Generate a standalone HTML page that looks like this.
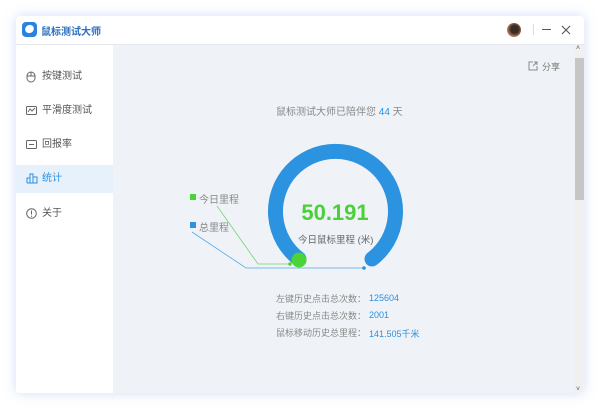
<!DOCTYPE html>
<html><head><meta charset="utf-8"><style>
body{margin:0;width:600px;height:409px;background:#fff;font-family:"Liberation Sans","Noto Sans CJK SC",sans-serif;overflow:hidden;position:relative}
.win{position:absolute;left:16px;top:16px;width:568px;height:377px;background:#fff;border-radius:4px;box-shadow:0 0 12px rgba(120,160,230,.35);overflow:hidden}
.title{position:absolute;left:0;top:0;width:568px;height:28px;background:#fff;border-bottom:1px solid #e4e7ec}
.side{position:absolute;left:0;top:29px;width:97px;height:348px;background:#fff}
.main{position:absolute;left:97px;top:29px;width:462px;height:348px;background:#eff3f7}
.sb{position:absolute;left:559px;top:29px;width:9px;height:348px;background:#f0f0f0}
.item{position:absolute;left:0;width:97px;height:27px;font-size:10px;color:#555;line-height:27px}
.item span{position:absolute;left:26px}
.t{position:absolute;font-size:9px;color:#888;white-space:nowrap}
.b{color:#2f8fde}
</style></head><body>
<div class="win">
 <div class="title">
  <div style="position:absolute;left:6px;top:6px;width:15px;height:15px;border-radius:4px;background:#2a82e0"><div style="position:absolute;left:3px;top:3px;width:9px;height:8px;border-radius:50%;background:#fff;transform:rotate(-30deg)"></div></div>
  <div style="position:absolute;left:25px;top:7px;font-size:10px;color:#2a6fc0;font-weight:bold">鼠标测试大师</div>
  <div style="position:absolute;left:491px;top:7px;width:14px;height:14px;border-radius:50%;background:radial-gradient(circle at 55% 45%,#3a2a22 35%,#c08060 70%,#ddd)"></div>
  <div style="position:absolute;left:517px;top:8px;width:1px;height:11px;background:#ddd"></div>
  <div style="position:absolute;left:526px;top:13px;width:9px;height:1px;background:#555"></div>
  <svg style="position:absolute;left:545px;top:9px" width="10" height="10"><path d="M1 1L9 9M9 1L1 9" stroke="#555" stroke-width="1.1"/></svg>
 </div>
 <div class="side">
  <div class="item" style="top:18px"><svg style="position:absolute;left:10px;top:8px" width="10" height="12"><rect x="1" y="1" width="8" height="10" rx="4" fill="none" stroke="#666"/><line x1="1" y1="5" x2="9" y2="5" stroke="#666"/><line x1="5" y1="1" x2="5" y2="5" stroke="#666"/></svg><span>按键测试</span></div>
  <div class="item" style="top:52px"><svg style="position:absolute;left:10px;top:9px" width="11" height="9"><rect x=".5" y=".5" width="10" height="8" rx="1" fill="none" stroke="#666"/><polyline points="2,6 4,3 6,5 9,2" fill="none" stroke="#666"/></svg><span>平滑度测试</span></div>
  <div class="item" style="top:86px"><svg style="position:absolute;left:10px;top:9px" width="11" height="9"><rect x=".5" y=".5" width="10" height="8" rx="1" fill="none" stroke="#666"/><line x1="3" y1="4.5" x2="8" y2="4.5" stroke="#666"/></svg><span>回报率</span></div>
  <div class="item" style="top:120px;background:#e6f1fb;color:#2f8fde;height:28px"><svg style="position:absolute;left:10px;top:8px" width="12" height="11"><path d="M1 10V5h3v5M4 10V1h3v9M7 10V4h4v6H1" fill="none" stroke="#2f8fde"/></svg><span>统计</span></div>
  <div class="item" style="top:155px"><svg style="position:absolute;left:10px;top:8px" width="11" height="11"><circle cx="5.5" cy="5.5" r="4.8" fill="none" stroke="#666"/><line x1="5.5" y1="2.5" x2="5.5" y2="6.5" stroke="#666"/><circle cx="5.5" cy="8.2" r=".6" fill="#666"/></svg><span>关于</span></div>
 </div>
 <div class="main"></div>
 <div class="sb"><div style="position:absolute;left:0;top:13px;width:9px;height:142px;background:#c6c6c6"></div><div style="position:absolute;left:1px;top:0;font-size:7px;color:#555">˄</div><div style="position:absolute;left:1px;bottom:0;font-size:7px;color:#555">˅</div></div>
</div>
<svg style="position:absolute;left:528px;top:61px" width="10" height="10"><path d="M5 1H1v8h8V5M6 1h3v3M9 1L5 5" fill="none" stroke="#888"/></svg>
<div class="t" style="left:542px;top:60px;color:#777">分享</div>
<div class="t" style="left:276px;top:103px;font-size:10px">鼠标测试大师已陪伴您 <span class="b">44</span> 天</div>
<svg style="position:absolute;left:0;top:0" width="600" height="409">
 <path d="M299 259 A60 60 0 1 1 372 259" fill="none" stroke="#2c93e0" stroke-width="15" stroke-linecap="round"/>
 <circle cx="299" cy="260" r="7.5" fill="#4bd43a"/>
 <polyline points="217,206 258,264 290,264" fill="none" stroke="#6fd86a" stroke-width=".8"/>
 <circle cx="290" cy="264" r="1.8" fill="#4bd43a"/>
 <polyline points="192,232 246,268 364,268" fill="none" stroke="#5aa8e6" stroke-width=".8"/>
 <circle cx="364" cy="268" r="1.8" fill="#2c93e0"/>
 <rect x="190" y="194" width="6" height="6" fill="#4bd43a"/>
 <rect x="190" y="222" width="6" height="6" fill="#2c93e0"/>
</svg>
<div class="t" style="left:199px;top:191px;font-size:10px">今日里程</div>
<div class="t" style="left:199px;top:219px;font-size:10px">总里程</div>
<div style="position:absolute;left:285px;top:200px;width:100px;text-align:center;font-size:22px;font-weight:bold;color:#4bcf3a">50.191</div>
<div class="t" style="left:298px;top:232px;font-size:9.5px;color:#666">今日鼠标里程 (米)</div>
<div class="t" style="left:276px;top:292px">左键历史点击总次数：</div><div class="t b" style="left:369px;top:293px">125604</div>
<div class="t" style="left:276px;top:309px">右键历史点击总次数：</div><div class="t b" style="left:369px;top:310px">2001</div>
<div class="t" style="left:276px;top:326px">鼠标移动历史总里程：</div><div class="t b" style="left:369px;top:327px">141.505千米</div>
</body></html>
